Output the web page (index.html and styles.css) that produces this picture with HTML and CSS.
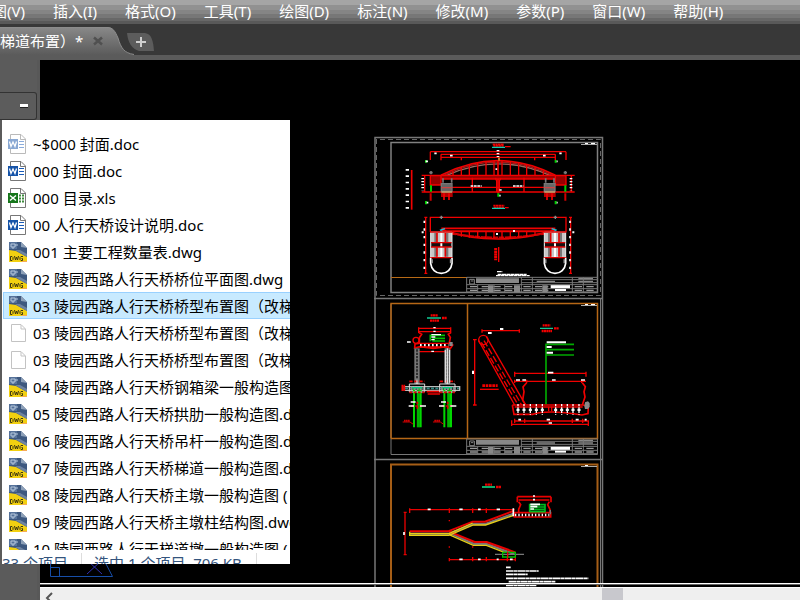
FILE: index.html
```html
<!DOCTYPE html>
<html lang="zh-CN">
<head>
<meta charset="utf-8">
<title>人行天桥桥型布置图</title>
<link rel="stylesheet" href="styles.css">
</head>
<body>
<svg class="defs" aria-hidden="true">
  <defs>
    <symbol id="word" viewBox="0 0 20 20">
      <path d="M5.500.5H13L17.500 5V19.500H.5V15M5.500.5H.5V5" fill="none"/>
      <path d="M2.500.5H13L17.500 5V19.500H2.500Z" fill="#fff" stroke="#777"/>
      <path d="M12.500 1V5.500H17" fill="none" stroke="#777"/>
      <path d="M11 7.500H16M11 10.500H16M11 13.500H16" stroke="#1a5cb8"/>
      <path d="M0 5H10V15H0Z" fill="#1553a8"/>
      <path d="M1.500 7.500L3 12.500L5 8L7 12.500L8.500 7.500" fill="none" stroke="#fff" stroke-width="1.300"/>
    </symbol>
    <symbol id="excel" viewBox="0 0 20 20">
      <path d="M2.500.5H13L17.500 5V19.500H2.500Z" fill="#fff" stroke="#777"/>
      <path d="M12.500 1V5.500H17" fill="none" stroke="#777"/>
      <path d="M11 7.500H13M14 7.500H16M11 10.500H13M14 10.500H16M11 13.500H13M14 13.500H16" stroke="#3c8a3c" stroke-width="2"/>
      <path d="M0 5H10V15H0Z" fill="#16761b"/>
      <path d="M2 7.500L8 12.500M8 7.500L2 12.500" stroke="#fff" stroke-width="1.500"/>
    </symbol>
    <symbol id="dwg" viewBox="0 0 20 20">
      <path d="M1 0H13L19 6V20H1Z" fill="#3d587f"/>
      <path d="M1 0H9V7H1Z" fill="#56729a"/>
      <path d="M3 2H7V5H3ZM7 3H10M5 5V7" fill="none" stroke="#b4c6da"/>
      <path d="M1 8L8 9L19 15V20H1Z" fill="#f2d010"/>
      <path d="M7 8L12 8L19 12V15Z" fill="#6e83a0"/>
      <path d="M13 0V5L19 6Z" fill="#8da0b8"/>
      <path d="M2.500 14.500V18.500H4L5 17.500V15.500L4 14.500ZM6.500 14L7.500 18L8.500 15L9.500 18L10.500 14M15 14.500H13L12 15.500V17.500L13 18.500H14.500V16.500H13.500" fill="none" stroke="#3d3711"/>
      <path d="M14 19.500H19" stroke="#f6a958"/>
    </symbol>
    <symbol id="blank" viewBox="0 0 20 20">
      <path d="M3.500 1.500H13L17.500 6V18.500H3.500Z" fill="#fff" stroke="#c3c3c3"/>
      <path d="M13 2V6H17" fill="none" stroke="#c3c3c3"/>
    </symbol>
    <g id="titleblock" fill="none">
      <path d="M290 201V248M454 201V248" stroke="#777" stroke-width="3"/>
      <path d="M290 202H684M454 209H684M454 218H684M290 224H684M290 236H684M290 246H684" stroke="#777" stroke-width="3"/>
      <path d="M318 212H447" stroke="#888" stroke-width="14"/>
      <path d="M299 208H313V222H299ZM303 213H310" stroke="#888" stroke-width="3"/>
      <path d="M300 230H450M300 241H450M460 230H535M460 241H535M614 230H676M614 241H676" stroke="#999" stroke-width="4" stroke-dasharray="22 13"/>
      <path d="M500 214H555M625 206H669M625 214H669" stroke="#888" stroke-width="4"/>
      <path d="M354 236H370M432 236H450M517 236H533" stroke="#888" stroke-width="20"/>
      <path d="M323 224V247M372 224V247M404 224V247M487 202V247M607 202V247M640 202V247" stroke="#777" stroke-width="3"/>
      <path d="M542 230H600" stroke="#fff" stroke-width="9"/>
      <path d="M555 240H588" stroke="#fff" stroke-width="6"/>
    </g>
    <g id="foot" fill="none">
      <path d="M145 262V382" stroke="#00b300" stroke-width="9"/>
      <path d="M132 262V382M152 262V382" stroke="#00d800" stroke-width="6"/>
      <path d="M141 145V252" stroke="#777" stroke-width="16"/>
      <path d="M141 148V250" stroke="#222" stroke-width="5" stroke-dasharray="7 3"/>
      <path d="M118 252H164V276H118Z" stroke="#ddd" stroke-width="3"/>
      <path d="M118 244H164" stroke="#e00000" stroke-width="5" stroke-dasharray="10 5"/>
      <path d="M141 238V252" stroke="#fff" stroke-width="3"/>
      <path d="M122 265H162" stroke="#888" stroke-width="10" stroke-dasharray="6 3"/>
      <path d="M126 263H156" stroke="#0c8" stroke-width="4"/>
      <path d="M118 277H164M123 318H160M142 305V330" stroke="#e00000" stroke-width="5" stroke-dasharray="8 5"/>
      <path d="M116 318H132M150 318H168M122 306H137" stroke="#fff" stroke-width="4"/>
      <path d="M98 366H120L130 373" stroke="#d00000" stroke-width="3"/>
      <path d="M102 362H120" stroke="#d00000" stroke-width="6" stroke-dasharray="5 1"/>
    </g>
    <g id="pier" fill="none">
      <path d="M182 66H246V142H182Z" fill="#c7c7c7" stroke="#eee" stroke-width="3"/>
      <path d="M184 105H244" stroke="#111" stroke-width="12"/>
      <path d="M214 66V142" stroke="#fff" stroke-width="6"/>
      <path d="M197 69V97M231 69V97M197 112V140M231 112V140" stroke="#777" stroke-width="8"/>
      <path d="M201 69V97M226 69V97M201 112V140M226 112V140" stroke="#e00000" stroke-width="5"/>
      <path d="M180 66H248M183 98H245M183 111H245M180 143H248" stroke="#e00000" stroke-width="4"/>
      <path d="M182 143V160C184 178 197 190 214 190S244 178 246 160V143" stroke="#fff" stroke-width="5"/>
      <path d="M186 148V160M242 148V160" stroke="#999" stroke-width="5"/>
    </g>
  </defs>
</svg>

<nav class="menubar" aria-label="主菜单">
  <button class="menu menu-first">视图(V)</button>
  <button class="menu">插入(I)</button>
  <button class="menu">格式(O)</button>
  <button class="menu">工具(T)</button>
  <button class="menu">绘图(D)</button>
  <button class="menu">标注(N)</button>
  <button class="menu">修改(M)</button>
  <button class="menu">参数(P)</button>
  <button class="menu">窗口(W)</button>
  <button class="menu">帮助(H)</button>
</nav>

<div class="tabbar">
  <div class="tab">
    <svg class="tab-shape" viewBox="0 0 134 28" aria-hidden="true">
      <defs><linearGradient id="tabfill" x2="0" y2="1"><stop offset="0" stop-color="#898989"/><stop offset="1" stop-color="#5b5b5b"/></linearGradient></defs>
      <path d="M0 0H107C113 0 115 4 118 11C121 21 124 26 134 28H0Z" fill="url(#tabfill)"/>
      <path d="M0 .5H107C113 .5 115 4 118 11C121 21 124 26 134 27.500" fill="none" stroke="#8c8c8c"/>
    </svg>
    <span class="tab-title">梯道布置）*</span>
    <button class="tab-close" aria-label="关闭">
      <svg viewBox="0 0 10 10" width="10" height="10"><path d="M1 1.500L9 8.500M9 1.500L1 8.500" stroke="#505050" stroke-width="2.500"/></svg>
    </button>
  </div>
  <button class="tab-new" aria-label="新建">
    <svg viewBox="0 0 28 20" width="28" height="20"><path d="M0 1H18C25 2 26 9 27 19H12C5 17 1 11 0 1Z" fill="#5c5c5c"/><path d="M14 5V15M9 10H19" stroke="#cfcfcf" stroke-width="2"/></svg>
  </button>
</div>

<main class="workspace">
  <aside class="side"><button class="collapse" aria-label="折叠"><span class="minus"></span></button></aside>
  <div class="stage">
    <svg class="drawing" viewBox="40 60 760 527" preserveAspectRatio="xMinYMin slice" role="img" aria-label="图纸">
      <g fill="none" stroke-width="1">
        <path d="M375 587V137.500H602.500V587M374 298.500H603M374 459.500H603" stroke="#777" stroke-width="1.500"/>
        <path d="M376.500 139V295.500H600.500V139.500H376" stroke="#666" stroke-dasharray="5 3"/>
        <path d="M391 142.500H597.500V292.500H391Z" stroke="#808080" stroke-width="1.500"/>
        <path d="M391 277.500H467" stroke="#b86a16"/>
        <path d="M391 304V454.500H597.500V304M597.500 464V587M600.500 299V587" stroke="#777"/>
        <path d="M391 438.500V303.500H597.500V438.500H391M467.500 303V438" stroke="#b66716" stroke-width="1.500"/>
        <path d="M391 587V464.500H597.500V587" stroke="#a65e16" stroke-width="2"/>
        <path d="M581 144.500H597M581 305.500H597M581 466.500H597" stroke="#aaa"/>
        <path d="M585 143.500H588M591 143.500H595M585 304.500H588M591 304.500H595M585 465.500H588" stroke="#fff"/>
      </g>

      <g transform="translate(370 130) scale(.33333)" fill="none" stroke="#f00000" stroke-width="4">
        <path d="M368 43H402M370 48H402M370 227H403M371 233H403" stroke-width="5" stroke-dasharray="7 1"/>
        <path d="M405 50H422M405 233H416"/>
        <path d="M366 52H405M366 235H405" stroke="#0ccfb4"/>
        <path d="M181 65H588M213 73H556M213 82H556M181 65V90M588 65V90M213 73V91M556 73V91M274 80V91M494 80V91"/>
        <path d="M213 136Q384 48 556 136" stroke-width="5"/>
        <path d="M230 136Q384 67 540 136" stroke="#9b6a60" stroke-width="4"/>
        <path d="M219 137Q384 56 550 137" stroke="#a81919"/>
        <path d="M249 122V136M274 111V136M298 104V136M323 98V136M348 94V136M372 92V136M396 92V136M421 94V136M446 98V136M470 104V136M495 111V136M520 122V136"/>
        <path d="M384 92V190" stroke-width="5"/>
        <path d="M213 141H556" stroke="#a00000" stroke-width="12"/>
        <path d="M181 136H588M181 147H556M181 186H588"/>
        <path d="M181 137H213V165H181ZM556 137H588V165H556Z" fill="#980000"/>
        <path d="M246 172H522M307 143V186M462 143V186M376 144L380 153V186M393 144L388 153V186"/>
        <path d="M214 161H246V185H214ZM523 161H555V185H523Z" fill="#666" stroke="#777"/>
        <path d="M214 173H246M523 173H555" stroke="#c44"/>
        <path d="M214 186H246M523 186H555" stroke="#caa16d" stroke-width="5"/>
        <path d="M222 190V210M237 190V210M531 190V210M546 190V210M182 190V212M586 190V212" stroke="#d00000" stroke-width="6"/>
        <path d="M213 192H248M522 192H557M213 198H248M522 198H557"/>
        <path d="M164 136V186M155 136H181M155 186H181M604 136V186M588 136H614M588 186H614"/>
        <path d="M125 120V239" stroke-width="5"/>
        <path d="M112 117V238" stroke="#fff" stroke-width="10" stroke-dasharray="5 14"/>
        <path d="M183 166V185M586 166V185M168 90V98M168 213V223M557 90V98M557 213V223M385 190V200" stroke="#00d000" stroke-width="6"/>
        <path d="M384 60V81M158 144V181M603 144V181" stroke="#fff" stroke-width="8" stroke-dasharray="4 5"/>
        <path d="M193 70H200M240 77H248M519 77H527M568 70H575M302 168H335M429 168H460M379 115V120M167 94H174M560 94H563M170 218H175M560 218H563M388 180H395M388 197H392" stroke="#fff" stroke-width="5" stroke-dasharray="8 2"/>
        <path d="M387 83V92" stroke="#b78133" stroke-width="6"/>
        <path d="M183 123V133M178 128H188M586 123V133M581 128H591M219 145V158M245 145V158M527 145V158M552 145V158" stroke="#777" stroke-width="5"/>
      </g>

      <g transform="translate(370 210) scale(.33333)" fill="none" stroke="#f00000" stroke-width="4">
        <path d="M181 66V22H588V66M248 65H521"/>
        <path d="M167 22V190M163 22H172M163 190H172M602 22V190M597 22H606M597 190H606"/>
        <path d="M163 32V182M600 32V182" stroke="#fff" stroke-width="5" stroke-dasharray="7 16"/>
        <path d="M214 55H556M229 63H541M214 59Q384 115 556 59" stroke-width="5"/>
        <path d="M225 67Q384 98 545 67" stroke="#cf0000" stroke-width="6" stroke-dasharray="16 2"/>
        <path d="M250 65V73M274 63V80M298 63V83M323 63V84M348 63V85M372 63V85M396 63V85M421 63V84M446 63V83M470 63V81M495 63V76M520 63V72"/>
        <path d="M225 56L212 60L222 70H246M545 56L558 60L548 70H524" stroke="#17c6df" stroke-width="4"/>
        <path d="M378 72H384M429 63H435M155 67H161M607 67H613" stroke="#fff" stroke-width="6"/>
        <use href="#pier"/><use href="#pier" x="341"/>
        <path d="M214 17V27M209 22H219M556 17V27M551 22H561" stroke="#888"/>
        <path d="M377 114V151" stroke-width="9" stroke-dasharray="7 1"/><path d="M386 111V156"/>
        <path d="M381 185H397M378 197H479M383 193H470" stroke="#fff" stroke-width="4" stroke-dasharray="12 1"/>
        <use href="#titleblock"/>
      </g>

      <g transform="translate(370 300) scale(.33333)" fill="none" stroke="#f00000" stroke-width="4">
        <path d="M182 46H204M180 62H208M216 54H231M518 76H541M515 93H546M552 85H567" stroke-width="7" stroke-dasharray="6 1"/>
        <path d="M171 54H213M510 85H549" stroke="#10c994" stroke-width="4"/>
        <path d="M146 85H242M146 95H242M146 82V99M242 82V99M137 155H238M137 151V159M238 151V159"/>
        <path d="M147 98L155 103L148 113V130L135 132L134 144L150 140L190 145L231 140L240 147L248 135L238 129L241 112L235 103L243 98" stroke-width="5"/>
        <path d="M150 135H235" stroke="#fff" stroke-width="10" stroke-dasharray="5 7"/>
        <path d="M148 130H240M150 141H238"/>
        <circle cx="138" cy="121" r="9"/><path d="M238 132H248" stroke="#888" stroke-width="12"/>
        <path d="M181 124V106H225M187 115H225M187 123H225" stroke="#00c000" stroke-width="5"/>
        <path d="M184 104H213M184 111H196M184 119H194M111 126H122M190 83H197M190 94H197M184 154H192" stroke="#fff" stroke-width="4"/>
        <path d="M103 260H269V271H103Z" stroke="#bbb"/><path d="M105 265H267" stroke="#348c86" stroke-width="5" stroke-dasharray="9 4"/>
        <path d="M97 254V273M103 254V273M170 275H211M173 282H210" stroke-width="5"/>
        <use href="#foot"/><use href="#foot" x="91"/>
        <path d="M226 150V248M239 150V248M232 145V252" stroke="#ddd"/>
        <circle cx="340" cy="120" r="14"/>
        <path d="M326 122L434 315M349 110L466 314M336 88V98M448 88V98M336 92H448M314 119V315M309 119H320M309 315H320"/>
        <path d="M334 127L447 319M342 122L455 315" stroke-dasharray="20 7"/>
        <path d="M390 87H400M354 99H365M309 212V222" stroke="#fff" stroke-width="6"/>
        <path d="M330 268H386"/><path d="M337 257H383" stroke-width="8" stroke-dasharray="8 2"/>
        <path d="M434 220H648M434 215V230M648 215V230M434 244H648M434 239V249M470 239V249M635 239V249"/>
        <path d="M534 218H550M438 240H450M457 240H468M546 240H557M633 240H645" stroke="#fff" stroke-width="5"/>
        <path d="M470 248L459 261L462 275L458 300L466 314M637 248L646 260L642 275L645 291L637 315" stroke-width="5"/>
        <path d="M427 315H640L655 320L654 341L636 345Q535 328 488 343H432L427 315M434 321H638" stroke-width="5"/>
        <path d="M444 326V340M462 326V340M481 326V340M499 326V340M517 326V340M557 326V340M575 326V340M592 326V340M609 326V340M627 326V340" stroke="#fff" stroke-width="9" stroke-dasharray="7 7"/>
        <path d="M444 312V344M462 312V344M481 312V344M499 312V344M517 312V344M557 312V344M575 312V344M592 312V344M609 312V344M627 312V344" stroke="#fff" stroke-dasharray="7 3"/>
        <path d="M536 320V334M545 320V334"/>
        <path d="M645 307L654 304L659 309V320L654 327H645L643 318Z" fill="#888" stroke="none"/>
        <path d="M528 313V133H612M528 149H612M528 165H612" stroke="#00a800" stroke-width="5"/>
        <path d="M530 127H588M530 141H545M530 158H549" stroke="#fff" stroke-width="6"/>
        <path d="M434 363H655M425 373H655M434 356V369M464 356V369M607 356V369M638 356V369M425 361V378M655 361V378"/>
        <path d="M445 359H453M530 359H540M617 359H626M644 359H650M536 369H546" stroke="#fff" stroke-width="5"/>
        <use href="#titleblock" y="215"/>
      </g>

      <g transform="translate(370 455) scale(.33333)" fill="none" stroke="#e80000" stroke-width="4">
        <path d="M345 89H366M378 96H393" stroke-width="7" stroke-dasharray="7 1"/><path d="M336 96H375" stroke="#10cf82" stroke-width="5"/>
        <path d="M119 164H434M119 160V174M238 160V174M308 160V174M349 160V174M105 172V299M101 172H110M101 299H110M238 314H436M238 309V319M308 306V319M349 306V319M412 306V319M436 306V319M238 195V199M238 274V278M308 274V278"/>
        <path d="M119 236H238L310 207H346L432 176M240 234L313 267H350L433 297" stroke="#777" stroke-width="7"/>
        <path d="M119 229H234L308 200H345L430 168M238 230L314 261H350L436 292" stroke-width="6"/>
        <path d="M119 230V241H237L310 210H347L431 181M237 239L310 271H349L405 293M119 236H237L308 204" stroke="#e5ce16"/>
        <path d="M442 125H543M446 135H538M442 125V142M543 125V142" stroke-width="5"/>
        <path d="M446 140L452 149L446 163V172M538 140L533 149L540 163V172M433 173H542V186H433Z" stroke-width="5"/>
        <path d="M435 180H538" stroke="#fff" stroke-width="8" stroke-dasharray="4 6"/>
        <path d="M479 172V149H525V170H480M480 156H525M480 163H525" stroke="#00b820" stroke-width="5"/>
        <path d="M481 148H510M481 155H502M481 162H492M489 123H495M489 134H495M173 163H182M268 163H278M324 163H332M380 163H390M268 313H278M324 313H332M380 313H386M102 231V240M430 160V184M420 313H428" stroke="#fff" stroke-width="5"/>
        <path d="M375 298H462M541 165V178" stroke="#777"/>
        <path d="M398 292H436V306H398Z" stroke="#00c000" stroke-width="4"/><path d="M413 290V308"/>
        <path d="M408 337H422M408 348H506M408 358H473M408 370H655M416 380H557M408 391H499" stroke="#fff" stroke-width="5" stroke-dasharray="22 1 11 1"/>
      </g>
      <g fill="none" stroke="#174ea8">
        <path d="M50.500 560V576.500H112.500L104 560M50.500 567.500H59.500V576"/>
        <path d="M87 574L101 561M88 561L102 574" stroke="#3030b0"/>
      </g>
      <path d="M40 583.500H2000" stroke="#fff" fill="none"/>
      <path d="M40 584.500H2000" stroke="#666" fill="none"/>
    </svg>
    <div class="scroll">
      <button class="scroll-left" aria-label="向左滚动"><svg viewBox="0 0 8 12" width="8" height="12"><path d="M7 1L2 6L7 11" fill="none" stroke="#555" stroke-width="2"/></svg></button>
      <span class="thumb"></span>
    </div>
  </div>
</main>

<section class="files" aria-label="文件">
  <ul class="list">
    <li class="file"><svg class="icon faded"><use href="#word"/></svg>~$000 封面.doc</li>
    <li class="file"><svg class="icon"><use href="#word"/></svg>000 封面.doc</li>
    <li class="file"><svg class="icon"><use href="#excel"/></svg>000 目录.xls</li>
    <li class="file"><svg class="icon"><use href="#word"/></svg>00 人行天桥设计说明.doc</li>
    <li class="file"><svg class="icon"><use href="#dwg"/></svg>001 主要工程数量表.dwg</li>
    <li class="file"><svg class="icon"><use href="#dwg"/></svg>02 陵园西路人行天桥桥位平面图.dwg</li>
    <li class="file selected"><svg class="icon"><use href="#dwg"/></svg>03 陵园西路人行天桥桥型布置图（改梯</li>
    <li class="file"><svg class="icon"><use href="#blank"/></svg>03 陵园西路人行天桥桥型布置图（改梯</li>
    <li class="file"><svg class="icon"><use href="#blank"/></svg>03 陵园西路人行天桥桥型布置图（改梯</li>
    <li class="file"><svg class="icon"><use href="#dwg"/></svg>04 陵园西路人行天桥钢箱梁一般构造图</li>
    <li class="file"><svg class="icon"><use href="#dwg"/></svg>05 陵园西路人行天桥拱肋一般构造图.dwg</li>
    <li class="file"><svg class="icon"><use href="#dwg"/></svg>06 陵园西路人行天桥吊杆一般构造图.dwg</li>
    <li class="file"><svg class="icon"><use href="#dwg"/></svg>07 陵园西路人行天桥梯道一般构造图.dwg</li>
    <li class="file"><svg class="icon"><use href="#dwg"/></svg>08 陵园西路人行天桥主墩一般构造图 (</li>
    <li class="file"><svg class="icon"><use href="#dwg"/></svg>09 陵园西路人行天桥主墩柱结构图.dwg</li>
    <li class="file"><svg class="icon"><use href="#dwg"/></svg>10 陵园西路人行天梯道墩一般构造图 (</li>
  </ul>
  <footer class="status"><span class="count">33 个项目</span><span class="chosen">选中 1 个项目&nbsp; 706 KB</span></footer>
</section>
</body>
</html>
```

FILE: styles.css
```css
* { box-sizing: border-box; }
body {
  margin: 0;
  height: 100vh;
  display: flex;
  flex-direction: column;
  overflow: hidden;
  background: #5b5b5b;
  font: 15px/20px "Noto Sans", "Noto Sans CJK SC", sans-serif;
  font-weight: 400;
  color: #000;
}
button {
  margin: 0;
  padding: 0;
  border: 0;
  background: none;
  font: inherit;
  color: inherit;
}
.defs { position: absolute; width: 0; height: 0; }
.menubar {
  height: 24px;
  flex: none;
  display: flex;
  gap: 28px;
  overflow: hidden;
  color: #fff;
  background: linear-gradient(#a5a5a5 5px, #919191 5px 10px, #858585 10px 14px, #777 14px 18px, #686868 18px 21px, #595959 21px);
}
.menu { flex: none; height: 22px; white-space: nowrap; }
.menu-first { margin-left: -23px; }
.tabbar {
  height: 31px;
  flex: none;
  display: flex;
  align-items: flex-end;
  background: #383838;
}
.tab {
  position: relative;
  width: 127px;
  height: 28px;
  display: flex;
  align-items: center;
  color: #fff;
}
.tab-shape { position: absolute; left: 0; top: 0; width: 134px; height: 28px; }
.tab-title { position: relative; width: 93px; white-space: nowrap; }
.tab-close { position: relative; display: flex; }
.tab-new { display: flex; padding-bottom: 3px; }
.workspace {
  flex: 1;
  min-height: 0;
  display: flex;
  padding-top: 5px;
}
.side { width: 40px; flex: none; padding-top: 32px; border-right: 3px solid #585858; }
.collapse {
  display: flex;
  align-items: center;
  justify-content: flex-end;
  width: 37px;
  height: 28px;
  padding-right: 8px;
  border: 1px solid #333;
  border-left: 0;
  border-radius: 0 3px 3px 0;
  background: #5c5c5c;
}
.minus { width: 8px; height: 4px; background: #fff; border-bottom: 1px solid #222; }
.stage {
  flex: 1;
  min-width: 0;
  display: flex;
  flex-direction: column;
  background: #000;
}
.drawing { display: block; width: 100%; flex: 1; min-height: 0; }
.scroll {
  height: 13px;
  flex: none;
  display: flex;
  overflow: hidden;
  border-top: 1px solid #fff;
  background: #efefef;
}
.scroll-left { display: flex; padding: 4px 0 0 5px; width: 74%; }
.thumb { width: 21px; background: #c8c8cd; }
.files {
  position: absolute;
  left: 2px;
  top: 120px;
  width: 288px;
  height: 444px;
  overflow: hidden;
  background: #fff;
}
.list {
  height: 430px;
  margin: 0;
  padding: 10px 0 0;
  overflow: hidden;
  list-style: none;
}
.file {
  display: flex;
  align-items: center;
  gap: 5px;
  height: 27px;
  margin-left: 1px;
  padding-left: 5px;
  white-space: nowrap;
}
.selected { background: #c8eaff; box-shadow: inset 1px 0 #99d1ff, inset 0 1px #99d1ff, inset 0 -1px #99d1ff; }
.icon { width: 20px; height: 20px; flex: none; }
.faded { opacity: .5; }
.status { display: flex; height: 20px; padding-top: 3px; color: #33547d; white-space: nowrap; }
.count { width: 80px; border-right: 1px solid #ddd; }
.chosen { width: 175px; padding-left: 12px; border-right: 1px solid #ddd; }
```
